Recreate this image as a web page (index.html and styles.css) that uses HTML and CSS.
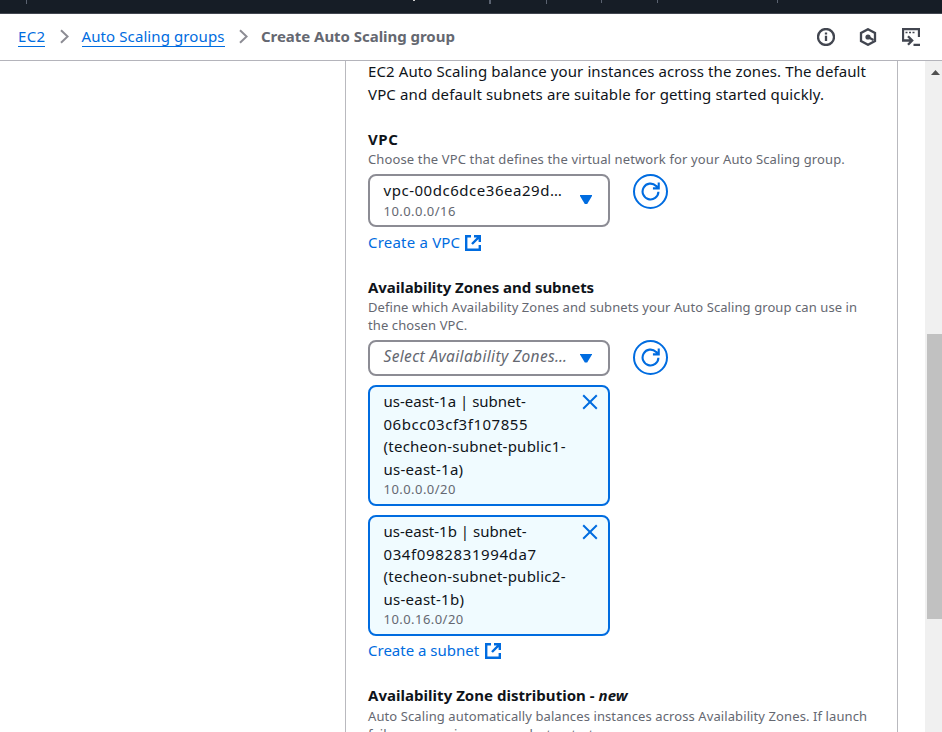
FILE: index.html
```html
<!DOCTYPE html>
<html lang="en">
<head>
<meta charset="utf-8">
<title>Create Auto Scaling group</title>
<link rel="stylesheet" href="styles.css">
</head>
<body>
<svg class="defs" width="0" height="0">
  <symbol id="refresh" viewBox="0 0 18 18"><path d="M16.500 9.200A7.500 7.500 0 1 1 14.300 3.700L16.300 5.400M16.800 .5V6H11.300"/></symbol>
  <symbol id="external" viewBox="0 0 16 16"><path d="M6 1.200H1.200V14.800H14.800V10M9 1.200H14.800V7M14.600 1.400L7 9"/></symbol>
  <symbol id="close" viewBox="0 0 16 16"><path d="M1.200 1.200L14.800 14.800M14.800 1.200L1.200 14.800"/></symbol>
  <symbol id="chevron" viewBox="0 0 9 15"><path d="M1 1.300L7.600 7.500L1 13.700"/></symbol>
</svg>
<div class="topbar"><i class="tick t1"></i><i class="tick t2"></i><i class="tick t3"></i><i class="tick t4"></i><i class="tick t5"></i><i class="tick t6"></i><i class="tick t7"></i></div>
<header class="crumbs">
  <nav>
    <a class="c1" href="#">EC2</a>
    <svg class="chev"><use href="#chevron"/></svg>
    <a class="c2" href="#">Auto Scaling groups</a>
    <svg class="chev"><use href="#chevron"/></svg>
    <b class="c3">Create Auto Scaling group</b>
  </nav>
  <div class="tools">
    <svg width="18" height="18" viewBox="0 0 18 18"><circle cx="9" cy="9" r="8"/><path d="M9 7.800V13M9 4.500V6.500"/></svg>
    <svg width="18" height="18" viewBox="0 0 18 18"><path d="M9 1.200L16 5V13L9 16.800L2 13V5Z"/><path d="M9 9L14.500 12"/><circle class="dot" cx="9" cy="9" r="2.600"/></svg>
    <svg width="18" height="18" viewBox="0 0 18 18"><path d="M1 11V1H17V9M1 10V12.500H9.500M6 8.200L10.200 12.500L6 16.800M11.500 17H18"/><path class="thin" d="M3.500 4.500H5.500M7 4.500H9M10.500 4.500H12.500"/></svg>
  </div>
</header>
<main>
  <div class="view">
    <section class="panel">
      <p class="intro"><span class="i1">EC2 Auto Scaling balance your instances across the zones. The default</span><span class="i2">VPC and default subnets are suitable for getting started quickly.</span></p>

      <div class="field vpc">
        <h3 class="h1">VPC</h3>
        <p class="desc"><span class="d1">Choose the VPC that defines the virtual network for your Auto Scaling group.</span></p>
        <div class="row">
          <div class="select tall"><div><div class="value">vpc-00dc6dce36ea29d…</div><div class="sub">10.0.0.0/16</div></div><i class="caret"></i></div>
          <button class="refresh" aria-label="Refresh"><svg><use href="#refresh"/></svg></button>
        </div>
        <a class="link" href="#"><span class="l1">Create a VPC</span><svg><use href="#external"/></svg></a>
      </div>

      <div class="field zones">
        <h3 class="h2">Availability Zones and subnets</h3>
        <p class="desc"><span class="d2">Define which Availability Zones and subnets your Auto Scaling group can use in</span><span class="d3">the chosen VPC.</span></p>
        <div class="row">
          <div class="select"><div class="placeholder">Select Availability Zones…</div><i class="caret"></i></div>
          <button class="refresh" aria-label="Refresh"><svg><use href="#refresh"/></svg></button>
        </div>
        <div class="token"><div><span class="k1">us-east-1a | subnet-</span><span class="k2">06bcc03cf3f107855</span><span class="k3">(techeon-subnet-public1-</span><span class="k4">us-east-1a)</span><div class="sub">10.0.0.0/20</div></div><svg><use href="#close"/></svg></div>
        <div class="token"><div><span class="k1">us-east-1b | subnet-</span><span class="k5">034f0982831994da7</span><span class="k3">(techeon-subnet-public2-</span><span class="k4">us-east-1b)</span><div class="sub">10.0.16.0/20</div></div><svg><use href="#close"/></svg></div>
        <a class="link" href="#"><span class="l2">Create a subnet</span><svg><use href="#external"/></svg></a>
      </div>

      <div class="field dist">
        <h3 class="h3">Availability Zone distribution - <em>new</em></h3>
        <p class="desc"><span class="d4">Auto Scaling automatically balances instances across Availability Zones. If launch</span><span class="d5">failures occur in a zone, select a strategy.</span></p>
      </div>
    </section>
  </div>
  <div class="scrollbar"><i class="up"></i><i class="thumb"></i></div>
</main>
</body>
</html>
```
FILE: styles.css
```css
* { box-sizing: border-box; }
html, body { margin: 0; height: 732px; overflow: hidden; background: #fff; }
body { display: flex; flex-direction: column; font: 15px/22.5px "Noto Sans", "Open Sans", sans-serif; color: #0f141a; }
h3, p { margin: 0; }
span { display: block; white-space: nowrap; }
a { color: #006ce0; text-decoration: none; }
svg { fill: none; stroke: currentColor; stroke-width: 2; flex: none; }
.defs { position: absolute; }

.topbar { flex: none; position: relative; height: 14px; background: #161d26; border-bottom: 1px solid #424650; }
.tick { position: absolute; top: 0; width: 1px; height: 3px; background: #5a6270; }
.t1 { left: 26px; height: 4px; } .t2 { left: 413px; width: 2px; height: 1px; background: #ccc; }
.t3 { left: 489px; width: 2px; height: 4px; } .t4 { left: 546px; height: 4px; } .t5 { left: 601px; } .t6 { left: 657px; } .t7 { left: 777px; }

.crumbs { flex: none; height: 47px; display: flex; justify-content: space-between; padding: 0 22px 0 18px; border-bottom: 1px solid #b4b4bb; }
nav { display: flex; align-items: center; height: 45px; }
nav a { border-bottom: 1px solid #006ce0; height: 21px; line-height: 20px; white-space: nowrap; }
nav b { color: #656871; height: 21px; line-height: 20px; white-space: nowrap; }
.c1 { width: 27px; letter-spacing: .3px; } .c2 { width: 143px; letter-spacing: .1px; } .c3 { letter-spacing: -.04px; }
.chev { width: 9px; height: 15px; margin: 0 13px 0 14.5px; color: #8c8c94; }
.tools { display: flex; align-items: center; gap: 24px; height: 46px; color: #424650; }
.tools svg { stroke-width: 2.3; }
.tools svg:nth-child(-n+2) { position: relative; left: -1px; }
.tools .dot { fill: currentColor; stroke: none; } .tools .thin { stroke-width: 1.6; }

main { flex: 1; min-height: 0; display: flex; justify-content: space-between; overflow: hidden; }
.view { padding-left: 345px; }
.panel { width: 553px; height: 671px; overflow: hidden; border: solid #b9b9be; border-width: 0 1px; padding: 0 22px; }
.intro { height: 68px; margin-top: -1px; }
.i1 { letter-spacing: .1px; } .i2 { letter-spacing: .125px; }
.field h3 { font-size: 15px; line-height: 22px; height: 22px; font-weight: 700; white-space: nowrap; }
.field .h1 { letter-spacing: .6px; } .field .h2 { letter-spacing: -.05px; } .field .h3 { letter-spacing: .03px; }
.vpc { height: 148px; } .zones { height: 408px; }
.desc { font-size: 13px; line-height: 18px; color: #656871; }
.d1 { letter-spacing: .13px; } .d2 { letter-spacing: .085px; } .d3 { letter-spacing: .1px; } .d4 { letter-spacing: .1px; } .d5 { letter-spacing: .02px; }
.dist .desc { padding-top: 1px; }
.row { display: flex; gap: 23px; margin-top: 6px; }
.select { width: 242px; height: 36px; border: 2px solid #8c8c94; border-radius: 8px; display: flex; align-items: center; justify-content: space-between; padding: 0 16px 0 13.5px; }
.select.tall { height: 53px; align-items: flex-start; padding-top: 3px; }
.tall .caret { margin-top: 16px; }
.value { line-height: 22px; letter-spacing: .53px; }
.sub { font-size: 13px; line-height: 18px; color: #656871; letter-spacing: .45px; }
.tall .sub { padding-top: 1px; }
.placeholder { font-size: 15.5px; letter-spacing: .35px; font-style: italic; color: #656871; white-space: nowrap; margin-top: -3px; }
.caret { width: 12px; height: 9px; flex: none; background: #006ce0; clip-path: polygon(0 0, 100% 0, 100% 12%, 60% 100%, 40% 100%, 0 12%); }
.refresh { width: 35px; height: 35px; padding: 0; border: 2px solid #006ce0; border-radius: 50%; background: #fff; color: #006ce0; display: flex; align-items: center; justify-content: center; }
.refresh svg { width: 19px; height: 19px; margin: -1px 1px 0 0; }
.link { display: flex; align-items: center; gap: 5px; margin-top: 4px; height: 22px; }
.link svg { width: 16px; height: 16px; stroke-width: 2.4; margin-top: 1px; }
.l1 { letter-spacing: .2px; }
.zones .link { margin-top: 3px; gap: 6px; }
.token { width: 242px; height: 121px; margin-top: 9px; border: 2px solid #006ce0; border-radius: 8px; background: #f0fbff; display: flex; justify-content: space-between; padding: 3px 10px 0 13.5px; }
.token svg { width: 16px; height: 16px; margin-top: 4px; color: #006ce0; }
.k2 { letter-spacing: .53px; } .k3 { letter-spacing: .25px; } .k4 { letter-spacing: .25px; } .k5 { letter-spacing: .6px; }

.scrollbar { width: 17px; height: 671px; background: #f0f0f0; display: flex; flex-direction: column; }
.up { width: 9px; height: 5px; margin: 9px 0 0 6px; background: #505050; clip-path: polygon(50% 0, 100% 100%, 0 100%); }
.thumb { width: 15px; height: 285px; margin: 259px 0 0 2px; background: #c1c1c1; }
```
